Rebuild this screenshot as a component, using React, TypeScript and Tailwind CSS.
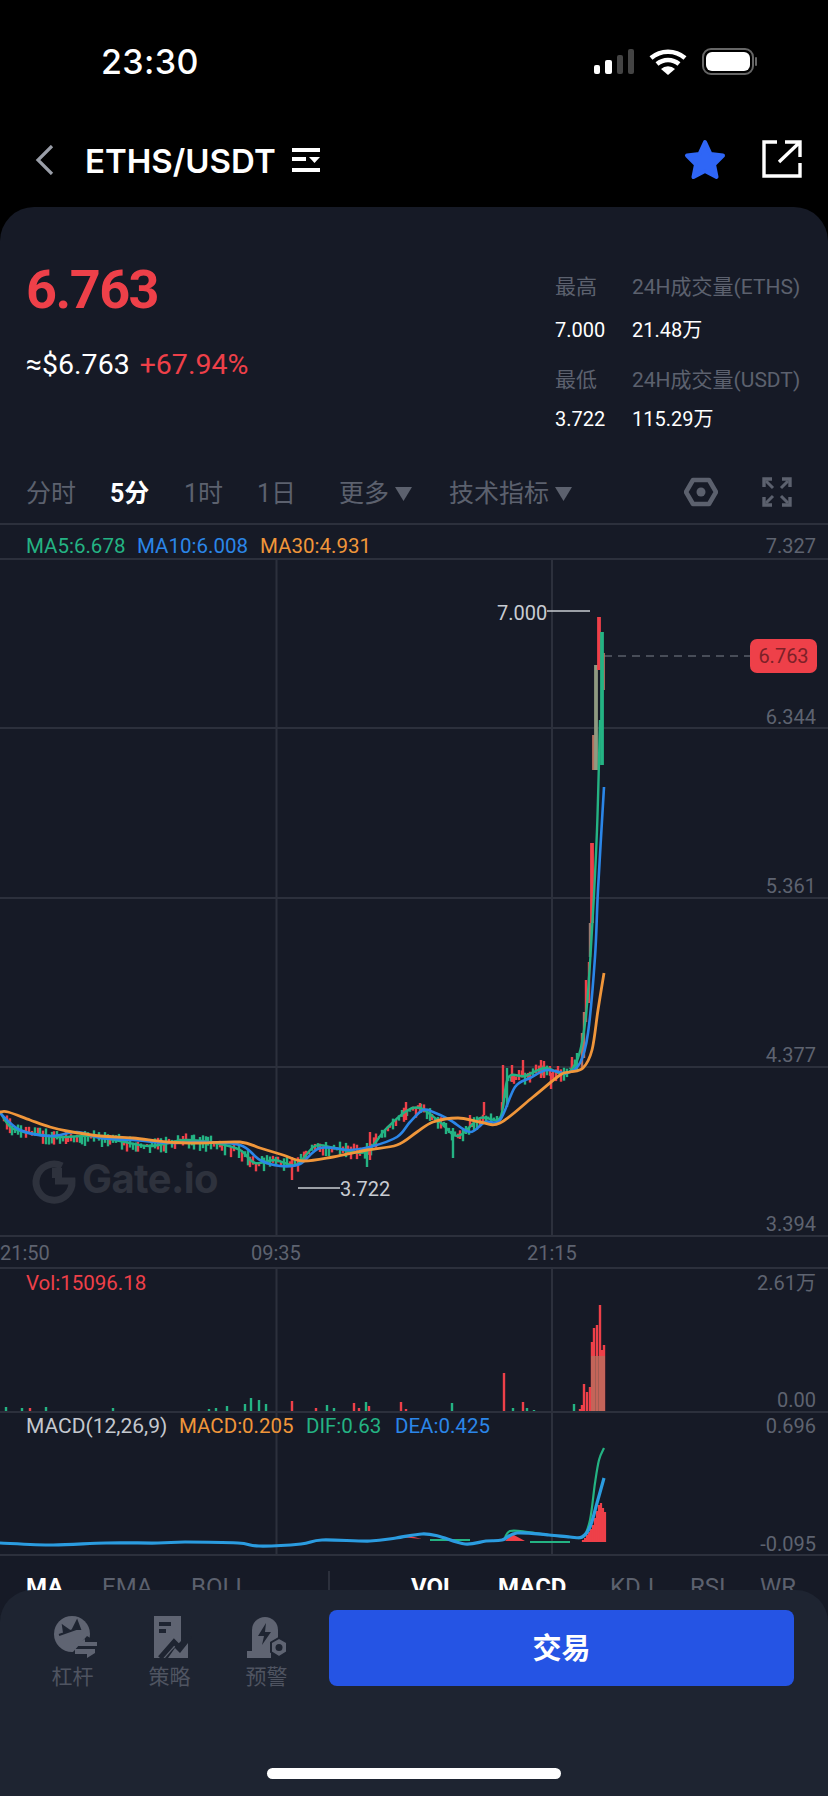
type Pt = [number, number];

const RED = "#ee4049";
const GREEN = "#24b383";
const BLUE = "#2b86e8";
const ORANGE = "#f0963a";

const ma30: Pt[] = [[0,1112],[8,1112],[30,1120],[50,1127],[67,1131],[100,1136],[133,1138],[167,1142],[200,1143],[240,1142],[260,1148],[283,1155],[303,1161],[333,1157],[367,1150],[397,1145],[417,1132],[433,1122],[458,1118],[480,1122],[500,1123],[533,1097],[560,1075],[570,1072],[583,1068],[592,1050],[598,1010],[604,973]];
const ma10: Pt[] = [[0,1113],[20,1130],[50,1136],[77,1132],[100,1138],[133,1140],[167,1143],[200,1142],[240,1145],[260,1160],[280,1166],[300,1164],[320,1148],[350,1150],[370,1147],[397,1137],[410,1122],[423,1110],[433,1112],[450,1120],[470,1132],[485,1122],[500,1120],[515,1087],[530,1078],[547,1070],[567,1073],[580,1063],[588,1033],[595,957],[598,890],[604,787]];
const ma5: Pt[] = [[0,1112],[12,1128],[35,1134],[60,1137],[90,1136],[120,1141],[150,1146],[185,1140],[215,1143],[240,1150],[255,1163],[275,1160],[296,1165],[315,1146],[335,1148],[365,1152],[385,1130],[405,1112],[420,1108],[440,1122],[458,1136],[480,1118],[500,1118],[508,1078],[525,1076],[545,1068],[565,1074],[578,1058],[586,1015],[592,930],[597,830],[600,720]];

const macdBlue: Pt[] = [[0,1543],[53,1545],[106,1543],[158,1543],[185,1542],[238,1543],[259,1546],[301,1544],[322,1540],[370,1541],[396,1538],[422,1534],[438,1536],[465,1544],[486,1541],[502,1540],[517,1533],[549,1535],[570,1537],[582,1537],[590,1527],[597,1503],[604,1478]];
const macdGreen: Pt[] = [[504,1540],[510,1531],[528,1532],[549,1535],[570,1537],[583,1537],[590,1520],[595,1483],[599,1460],[604,1448]];

// catmull-rom through the points, so the averages read as curves
const path = (pts: Pt[]) => {
  let d = `M${pts[0][0]} ${pts[0][1]}`;
  for (let i = 0; i < pts.length - 1; i++) {
    const p0 = pts[Math.max(i - 1, 0)];
    const p1 = pts[i];
    const p2 = pts[i + 1];
    const p3 = pts[Math.min(i + 2, pts.length - 1)];
    const c1x = p1[0] + (p2[0] - p0[0]) / 6;
    const c1y = p1[1] + (p2[1] - p0[1]) / 6;
    const c2x = p2[0] - (p3[0] - p1[0]) / 6;
    const c2y = p2[1] - (p3[1] - p1[1]) / 6;
    d += `C${c1x} ${c1y} ${c2x} ${c2y} ${p2[0]} ${p2[1]}`;
  }
  return d;
};

const interp = (pts: Pt[], x: number) => {
  for (let i = 1; i < pts.length; i++) {
    if (x <= pts[i][0]) {
      const [x0, y0] = pts[i - 1];
      const [x1, y1] = pts[i];
      return y0 + ((y1 - y0) * (x - x0)) / (x1 - x0);
    }
  }
  return pts[pts.length - 1][1];
};

// small repeatable scatter for the candles
let seed = 41;
const rnd = () => {
  seed = (seed * 16807) % 2147483647;
  return seed / 2147483647;
};

const scatter: [number, number, number, string][] = [];
for (let x = 4; x < 578; x += 2.8) {
  const y = interp(ma5, x);
  const up = rnd() * 7;
  const down = rnd() * 10;
  scatter.push([Math.round(x), y - up, y + down, rnd() > 0.55 ? RED : GREEN]);
}

const candles: [number, number, number, string][] = [
  ...scatter,
  [292, 1157, 1180, RED],
  [370, 1132, 1160, RED],
  [367, 1143, 1167, GREEN],
  [406, 1102, 1120, RED],
  [420, 1103, 1112, RED],
  [453, 1128, 1158, GREEN],
  [470, 1115, 1127, RED],
  [484, 1102, 1115, RED],
  [503, 1065, 1107, RED],
  [507, 1068, 1107, GREEN],
  [512, 1065, 1082, RED],
  [523, 1060, 1075, RED],
  [541, 1060, 1078, RED],
  [544, 1061, 1078, RED],
  [551, 1073, 1089, RED],
  [572, 1057, 1073, RED],
  [577, 1053, 1070, GREEN],
  [582, 1033, 1068, "#b5705f"],
  [584, 1012, 1058, "#b5705f"],
  [586, 980, 1022, RED],
  [589, 962, 1003, RED],
  [590, 923, 957, "#9a7a70"],
  [592, 843, 923, RED],
  [594, 735, 770, "#b5705f"],
  [596, 665, 770, "#8f9a80"],
  [599, 617, 670, RED],
  [603, 653, 690, "#b5705f"],
  [602, 632, 765, GREEN],
];

const volumes: [number, number, string][] = [
  [6,1407,GREEN],[22,1408,GREEN],[30,1408,RED],[46,1407,GREEN],[113,1408,GREEN],[209,1409,GREEN],[216,1408,GREEN],[227,1406,GREEN],[245,1404,GREEN],[251,1398,GREEN],[259,1400,GREEN],[266,1404,GREEN],[292,1401,RED],[316,1408,RED],[327,1405,GREEN],[334,1408,GREEN],[354,1403,RED],[359,1408,RED],[366,1402,GREEN],[369,1406,RED],[401,1402,RED],[406,1409,RED],[452,1403,GREEN],[504,1373,RED],[513,1408,GREEN],[523,1402,RED],[527,1408,GREEN],[534,1410,GREEN],[574,1404,GREEN],[580,1409,RED],[582,1405,RED],[584,1384,RED],[587,1392,RED],[590,1387,RED],[592,1342,RED],[594,1328,RED],[597,1325,RED],[600,1305,RED],[602,1350,RED],[604,1345,RED],
];

const histogram: Pt[] = [[583,1540],[585,1538],[587,1535],[589,1532],[591,1529],[593,1525],[595,1518],[597,1511],[599,1505],[601,1503],[603,1508],[605,1512]];

function PaneLines({ y1, y2 }: { y1: number; y2: number }) {
  return (
    <>
      <line x1="276.5" x2="276.5" y1={y1} y2={y2} stroke="#2c303c" strokeWidth="2" />
      <line x1="552" x2="552" y1={y1} y2={y2} stroke="#2c303c" strokeWidth="2" />
    </>
  );
}

function AxisLabel({ top, children }: { top: number; children: React.ReactNode }) {
  return (
    <span className="absolute right-[12px] text-[20px] leading-[26px] text-[#5e6370]" style={{ top }}>
      {children}
    </span>
  );
}

function MainChart() {
  return (
    <div className="relative h-[679px] border-y-2 border-[#2c303c]">
      <svg className="absolute inset-0" width="828" height="675" viewBox="0 560 828 675">
        <PaneLines y1={559} y2={1236} />
        {[728, 898, 1067].map((y) => (
          <line key={y} x1="0" x2="828" y1={y} y2={y} stroke="#2c303c" strokeWidth="2" />
        ))}
        <line x1="604" x2="750" y1="656" y2="656" stroke="#5a5f6a" strokeWidth="1.5" strokeDasharray="8 6" />
        <line x1="547" x2="590" y1="611" y2="611" stroke="#c8ccd2" strokeWidth="1.5" />
        <line x1="298" x2="340" y1="1188" y2="1188" stroke="#c8ccd2" strokeWidth="1.5" />
        <g fill="none" stroke="#2e323d" strokeWidth="7">
          <path d="M62 1166A18 18 0 1 0 72 1181H55" />
        </g>
        <rect x="52" y="1168" width="10" height="10" fill="#2e323d" />
        {candles.map(([x, a, b, c], i) => (
          <line key={i} x1={x} x2={x} y1={a} y2={b} stroke={c} strokeWidth={x > 590 ? 3.8 : 2.4} />
        ))}
        <path d={path(ma5)} fill="none" stroke={GREEN} strokeWidth="2.4" strokeLinejoin="round" />
        <path d={path(ma10)} fill="none" stroke={BLUE} strokeWidth="2.6" strokeLinejoin="round" />
        <path d={path(ma30)} fill="none" stroke={ORANGE} strokeWidth="2.8" strokeLinejoin="round" />
      </svg>
      <span className="absolute left-[82px] top-[595px] font-['Inter'] text-[40px] font-bold leading-[48px] tracking-[-0.6px] text-[#2e323d]">
        Gate.io
      </span>
      <span className="absolute left-[497px] top-[40px] text-[20px] leading-[26px] text-[#c8ccd2]">7.000</span>
      <span className="absolute left-[340px] top-[616px] text-[20px] leading-[26px] text-[#c8ccd2]">3.722</span>
      <span className="absolute left-[750px] top-[79px] flex h-[34px] w-[67px] items-center justify-center rounded-[7px] bg-[#ee4049] text-[20px] text-[#7d2028]">
        6.763
      </span>
      <AxisLabel top={144}>6.344</AxisLabel>
      <AxisLabel top={313}>5.361</AxisLabel>
      <AxisLabel top={482}>4.377</AxisLabel>
      <AxisLabel top={651}>3.394</AxisLabel>
    </div>
  );
}

function VolumePane() {
  return (
    <div className="relative h-[146px] border-y-2 border-[#2c303c]">
      <svg className="absolute inset-0" width="828" height="142" viewBox="0 1269 828 142">
        <PaneLines y1={1268} y2={1412} />
        {volumes.map(([x, top, c], i) => (
          <line key={i} x1={x} x2={x} y1={top} y2={1412} stroke={c} strokeWidth="2.4" />
        ))}
        <rect x="591" y="1356" width="14" height="56" fill="#b5705f" opacity="0.75" />
      </svg>
      <span className="absolute left-[26px] top-[1px] text-[20.5px] leading-[26px] text-[#ee4049]">Vol:15096.18</span>
      <AxisLabel top={1}>2.61万</AxisLabel>
      <AxisLabel top={118}>0.00</AxisLabel>
    </div>
  );
}

function MacdPane() {
  return (
    <div className="relative h-[143px] border-b-2 border-[#2c303c]">
      <svg className="absolute inset-0" width="828" height="141" viewBox="0 1413 828 141">
        <PaneLines y1={1413} y2={1555} />
        <path d="M400 1537L422 1539L410 1536ZM505 1541L525 1541L512 1534Z" fill={RED} />
        <path d="M430 1540H470M530 1542H570" fill="none" stroke={GREEN} strokeWidth="2" />
        {histogram.map(([x, top]) => (
          <line key={x} x1={x} x2={x} y1={top} y2={1542} stroke={RED} strokeWidth="2.2" />
        ))}
        <path d={path(macdGreen)} fill="none" stroke={GREEN} strokeWidth="2.2" />
        <path d={path(macdBlue)} fill="none" stroke="#2b9ce0" strokeWidth="3.2" strokeLinejoin="round" />
      </svg>
      <div className="absolute left-[26px] top-0 flex text-[20.5px] leading-[26px]">
        <span className="w-[153px] text-[21px] text-[#c4c8ce]">MACD(12,26,9)</span>
        <span className="w-[127px] text-[#f0963a]">MACD:0.205</span>
        <span className="w-[89px] text-[#24b383]">DIF:0.63</span>
        <span className="text-[#2b86e8]">DEA:0.425</span>
      </div>
      <AxisLabel top={0}>0.696</AxisLabel>
      <AxisLabel top={118}>-0.095</AxisLabel>
    </div>
  );
}

function Triangle() {
  return (
    <svg width="17" height="14" viewBox="0 0 17 14" className="ml-[6px]">
      <path d="M0 0H17L8.5 14Z" fill="#5c616e" />
    </svg>
  );
}

function ToolIcon({ label, children }: { label: string; children: React.ReactNode }) {
  return (
    <div className="flex w-[97px] flex-col items-center pt-[4px]">
      <svg width="48" height="46" viewBox="0 0 48 46">
        {children}
      </svg>
      <span className="mt-[4px] text-[21px] leading-[26px] text-[#4f5461]">{label}</span>
    </div>
  );
}

export default function App() {
  return (
    <div className="relative flex h-[1796px] w-[828px] flex-col overflow-hidden bg-black [font-family:Roboto,'Noto_Sans_CJK_SC',sans-serif]">
      <div className="flex h-[106px] shrink-0 items-start justify-between pl-[101px] pr-[70px] pt-[42px]">
        <span className="font-['Inter'] text-[34px] font-medium leading-[40px] tracking-[0.4px] text-white">23:30</span>
        <svg width="164" height="28" viewBox="594 48 164 28" className="mt-[6px]">
          <rect x="594" y="65" width="6" height="9" rx="2" fill="#fff" />
          <rect x="605" y="60" width="7" height="14" rx="2" fill="#fff" />
          <rect x="617" y="55" width="6" height="19" rx="2" fill="#444" />
          <rect x="628" y="49" width="6" height="25" rx="2" fill="#444" />
          <path d="M651 58A26 26 0 0 1 685 58" fill="none" stroke="#fff" strokeWidth="4.5" />
          <path d="M657 64A17 17 0 0 1 679 64" fill="none" stroke="#fff" strokeWidth="4.5" />
          <path d="M668 75L661 69A10 10 0 0 1 675 69Z" fill="#fff" />
          <rect x="703" y="49" width="50" height="25" rx="8" fill="none" stroke="#666" strokeWidth="2" />
          <rect x="706" y="52" width="44" height="19" rx="6" fill="#fff" />
          <rect x="755" y="57" width="2" height="9" rx="1" fill="#666" />
        </svg>
      </div>

      <div className="flex h-[101px] shrink-0 items-start pt-[36px]">
        <svg width="20" height="30" viewBox="0 0 20 30" className="ml-[35px] mt-[3px]">
          <path d="M17 1L3 15L17 29" fill="none" stroke="#9a9ea8" strokeWidth="3.2" />
        </svg>
        <span className="ml-[30px] font-['Inter'] text-[33px] font-semibold leading-[38px] text-white">
          ETHS/USDT
        </span>
        <svg width="28" height="28" viewBox="0 0 28 28" className="ml-[16px] mt-[4px]">
          <path d="M0 2H28V6H0ZM0 11H14V15H0ZM0 22H28V26H0Z" fill="#fff" />
          <path d="M17 11H28L22.5 17Z" fill="#fff" />
        </svg>
        <svg width="44" height="42" viewBox="0 0 44 42" className="ml-auto -mt-[3px]">
          <path d="M22 3L27.5 15L40 16.5L31 25.5L33.5 38L22 32L10.5 38L13 25.5L4 16.5L16.5 15Z" fill="#2f66f6" stroke="#2f66f6" strokeWidth="4" strokeLinejoin="round" />
        </svg>
        <svg width="40" height="40" viewBox="0 0 40 40" className="ml-[35px] mr-[26px] -mt-[3px]">
          <path d="M15 3H2V37H38V24M23 3H38V18M38 3L17 23" fill="none" stroke="#fff" strokeWidth="3.4" />
        </svg>
      </div>

      <div className="flex-1 rounded-t-[34px] bg-[#161a26]">
        <div className="flex h-[254px]">
          <div className="pl-[26px] pt-[56px]">
            <div className="text-[54px] font-bold leading-[54px] tracking-[-1.5px] text-[#ee4049]">6.763</div>
            <div className="mt-[30px] flex items-center text-[28.5px] leading-[36px] text-white">
              ≈$6.763
              <span className="ml-[10px] text-[#ee4049]">+67.94%</span>
            </div>
          </div>
          <div className="ml-auto w-[273px] pt-[65px] text-[20px] leading-[30px]">
            <div className="flex text-[21px] text-[#5c616e]">
              <span className="w-[77px]">最高</span>
              <span>24H成交量(ETHS)</span>
            </div>
            <div className="mt-[13px] flex text-white">
              <span className="w-[77px]">7.000</span>
              <span>21.48万</span>
            </div>
            <div className="mt-[20px] flex text-[21px] text-[#5c616e]">
              <span className="w-[77px]">最低</span>
              <span>24H成交量(USDT)</span>
            </div>
            <div className="mt-[9px] flex text-white">
              <span className="w-[77px]">3.722</span>
              <span>115.29万</span>
            </div>
          </div>
        </div>

        <div className="flex h-[64px] items-center border-b-2 border-[#2c303c] pl-[26px] pt-[3px] text-[25px] leading-[30px] text-[#5c616e]">
          <span className="w-[84px]">分时</span>
          <span className="w-[74px] font-bold text-white">5分</span>
          <span className="w-[73px]">1时</span>
          <span className="w-[82px]">1日</span>
          <span className="flex w-[110px] items-center">更多<Triangle /></span>
          <span className="flex items-center">技术指标<Triangle /></span>
          <svg width="34" height="30" viewBox="0 0 34 30" className="ml-auto -mt-[3px]">
            <path d="M9 3H25L32 15L25 27H9L2 15Z" fill="none" stroke="#5c616e" strokeWidth="4.5" strokeLinejoin="round" />
            <circle cx="17" cy="15" r="4.5" fill="#5c616e" />
          </svg>
          <svg width="30" height="30" viewBox="0 0 30 30" className="ml-[44px] mr-[36px] -mt-[3px]">
            <path d="M2 10V2H10M20 2H28V10M2 20V28H10M28 20V28H20" fill="none" stroke="#5c616e" strokeWidth="3.4" />
            <path d="M4 4L11 11M26 4L19 11M4 26L11 19M26 26L19 19" fill="none" stroke="#5c616e" strokeWidth="3" />
          </svg>
        </div>

        <div className="flex h-[33px] items-center pl-[26px] pr-[12px] pt-[9px] text-[20.5px] leading-[24px]">
          <span className="w-[111px] text-[#24b383]">MA5:6.678</span>
          <span className="w-[123px] text-[#2b86e8]">MA10:6.008</span>
          <span className="text-[#f0963a]">MA30:4.931</span>
          <span className="ml-auto text-[20px] text-[#5e6370]">7.327</span>
        </div>

        <MainChart />

        <div className="relative h-[30px] text-[20px] leading-[32px] text-[#5e6370]">
          <span className="absolute left-0">21:50</span>
          <span className="absolute left-[251px]">09:35</span>
          <span className="absolute left-[527px]">21:15</span>
        </div>

        <VolumePane />
        <MacdPane />

        <div className="flex items-center pl-[26px] pt-[15px] text-[24px] leading-[30px] text-[#5c616e]">
          <span className="w-[76px] font-bold text-white">MA</span>
          <span className="w-[89px]">EMA</span>
          <span className="w-[137px]">BOLL</span>
          <span className="h-[32px] w-[83px] border-l-2 border-[#2c303c]" />
          <span className="w-[87px] font-bold text-white">VOL</span>
          <span className="w-[112px] font-bold text-white">MACD</span>
          <span className="w-[80px]">KDJ</span>
          <span className="w-[70px]">RSI</span>
          <span>WR</span>
        </div>
      </div>

      <div className="absolute bottom-0 left-0 right-0 h-[206px] rounded-t-[32px] bg-[#1e2431]">
        <div className="flex items-start pl-[24px] pr-[34px] pt-[20px]">
          <ToolIcon label="杠杆">
            <circle cx="23" cy="20" r="18" fill="#5f6472" />
            <path d="M10 21L30 14M14 12L21 17L15 19ZM28 7L31 15L24 15Z" fill="#1e2431" stroke="#1e2431" strokeWidth="2" />
            <path d="M24 38L38 22L48 28V46H28Z" fill="#1e2431" />
            <path d="M28 30L36 25V28H48V32H28ZM26 35H46V39L38 44V40H26Z" fill="#5f6472" />
          </ToolIcon>
          <ToolIcon label="策略">
            <g transform="translate(-2 0)">
              <path d="M10 2H37V27L28 36L21 44H10Z" fill="#5f6472" />
              <path d="M15 8H27V12H15ZM15 15H22V19H15Z" fill="#1e2431" />
              <path d="M16 44L30 28L36 34L46 22" fill="none" stroke="#1e2431" strokeWidth="5" />
              <path d="M24 44L31 34L36 39L44 29V44Z" fill="#5f6472" />
            </g>
          </ToolIcon>
          <ToolIcon label="预警">
            <path d="M9 40V16A13 13 0 0 1 35 16V29L27 40Z" fill="#5f6472" />
            <rect x="4" y="37" width="24" height="7" fill="#5f6472" />
            <path d="M23 9L15 22H21L19 31L28 18H22Z" fill="#1e2431" />
            <path d="M36 24L44 28.5V38L36 43L28 38V28.5Z" fill="#5f6472" stroke="#1e2431" strokeWidth="2" />
            <circle cx="36" cy="33.5" r="3.5" fill="#1e2431" />
          </ToolIcon>
          <button className="ml-auto h-[76px] w-[465px] rounded-[8px] bg-[#2554e4] pt-[3px] text-[29px] font-bold text-white">
            交易
          </button>
        </div>
        <div className="absolute bottom-[17px] left-[267px] h-[11px] w-[294px] rounded-full bg-white" />
      </div>
    </div>
  );
}
